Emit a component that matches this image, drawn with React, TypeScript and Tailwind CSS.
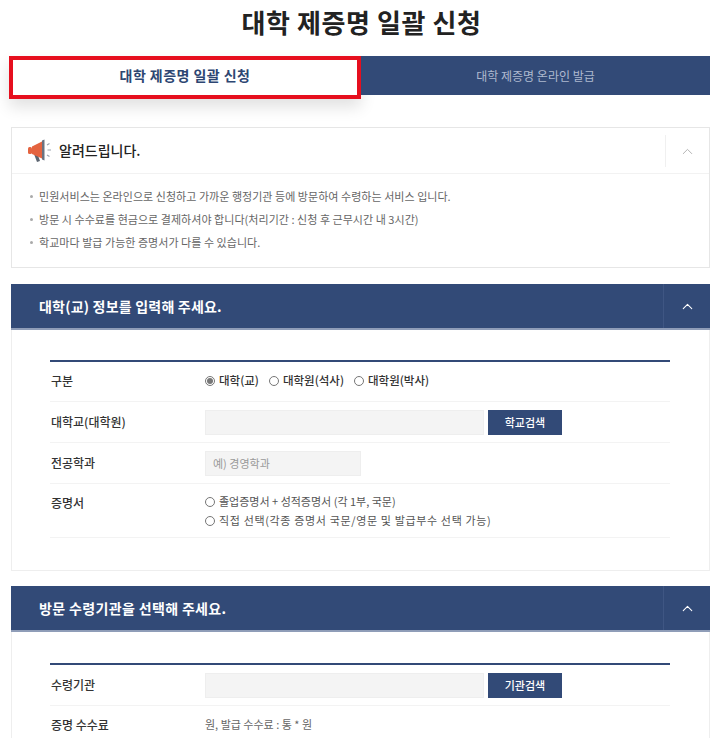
import React from 'react';
import { ChevronUp } from 'lucide-react';

const font = { fontFamily: '"Noto Sans CJK KR", "Noto Sans", sans-serif' };

function Megaphone() {
  return (
    <svg width="26" height="24" viewBox="0 0 26 24" className="shrink-0">
      <path d="M7 15 L10 23 L13 22 L10.5 15 Z" fill="#5b6470" />
      <rect x="1" y="8" width="4" height="7" rx="1.5" fill="#e4633f" />
      <path d="M5 7.5 L15 2.5 L15 19.5 L5 15 Z" fill="#e4633f" />
      <path d="M15 1.5 L17.5 0.5 L17.5 21.5 L15 20.5 Z" fill="#6b7280" />
      <path d="M20 6 L22.5 4.5 M20.5 11 L24 11 M20 16 L22.5 17.5" stroke="#9ca3af" strokeWidth="1.2" />
    </svg>
  );
}

function Radio({ checked = false }: { checked?: boolean }) {
  return (
    <span className="w-[10px] h-[10px] rounded-full border border-[#767676] bg-white flex items-center justify-center shrink-0">
      {checked && <span className="w-[6px] h-[6px] rounded-full bg-[#777]" />}
    </span>
  );
}

function SectionHead({ title, titleClass }: { title: string; titleClass: string }) {
  return (
    <div className="h-[46px] bg-[#324a77] border-b-2 border-[#8f9db8] flex items-center justify-between">
      <h2 className={`pl-[28px] text-[14px] font-bold text-white ${titleClass}`}>{title}</h2>
      <div className="w-[47px] h-[44px] border-l border-[#3f5683] flex items-center justify-center">
        <ChevronUp className="w-[17px] h-[17px] text-white" strokeWidth={1.5} />
      </div>
    </div>
  );
}

function Row({ label, className, labelClass = '', children }: { label: string; className: string; labelClass?: string; children: React.ReactNode }) {
  return (
    <div className={`flex border-b border-[#f3f3f3] ${className}`}>
      <div className={`w-[155px] pl-[1px] text-[12px] font-medium text-[#333] ${labelClass}`}>{label}</div>
      <div className="flex-1">{children}</div>
    </div>
  );
}

export default function App() {
  return (
    <div className="w-[720px] h-[738px] overflow-hidden bg-white" style={font}>
      <h1 className="h-[56px] pb-[13px] pl-[3px] flex items-center justify-center text-[26px] font-bold text-[#222] tracking-[0.6px]">
        대학 제증명 일괄 신청
      </h1>

      <div className="flex items-start pl-[9px] pr-[10px] h-[71px]">
        <button className="w-[352px] h-[43px] pb-[4px] border-4 border-[#e60f1e] bg-white text-[14px] font-bold text-[#2d4672] tracking-[0.45px] shadow-[0_8px_16px_rgba(0,0,0,0.12)]">
          대학 제증명 일괄 신청
        </button>
        <button className="flex-1 h-[39px] bg-[#324a77] text-[12px] text-[#aeb9cf]">대학 제증명 온라인 발급</button>
      </div>

      <div className="ml-[11px] mr-[10px] h-[141px] border border-[#e6e6e6]">
        <div className="h-[46px] border-b border-[#f2f2f2] flex items-center justify-between">
          <div className="flex items-center pl-[15px] gap-[6px]">
            <Megaphone />
            <span className="text-[14px] font-medium text-[#222]">알려드립니다.</span>
          </div>
          <div className="w-[44px] h-[32px] mt-[1px] border-l border-[#f0f0f0] flex items-center justify-center">
            <ChevronUp className="w-[17px] h-[17px] text-[#aaa]" strokeWidth={1.25} />
          </div>
        </div>
        <ul className="pt-[11px] pl-[18px] text-[11px] leading-[23px] text-[#666] tracking-[0.04px]">
          {[
            '민원서비스는 온라인으로 신청하고 가까운 행정기관 등에 방문하여 수령하는 서비스 입니다.',
            '방문 시 수수료를 현금으로 결제하셔야 합니다(처리기간 : 신청 후 근무시간 내 3시간)',
            '학교마다 발급 가능한 증명서가 다를 수 있습니다.',
          ].map((t) => (
            <li key={t} className="flex items-center gap-[6px]">
              <span className="w-[3px] h-[3px] rounded-full bg-[#aaa]" />
              {t}
            </li>
          ))}
        </ul>
      </div>

      <section className="mt-[16px] ml-[11px] mr-[10px]">
        <SectionHead title="대학(교) 정보를 입력해 주세요." titleClass="tracking-[0.2px]" />
        <div className="h-[241px] border border-t-0 border-[#eeeeee] pl-[38px] pr-[39px] pt-[30px]">
          <div className="border-t-2 border-[#324a77]">
            <Row label="구분" className="h-[40px] pt-[10px]">
              <div className="flex items-center text-[11.5px] font-medium text-[#333]">
                <span className="flex items-center gap-[4px] mr-[10px]"><Radio checked />대학(교)</span>
                <span className="flex items-center gap-[4px] mr-[10px]"><Radio />대학원(석사)</span>
                <span className="flex items-center gap-[4px]"><Radio />대학원(박사)</span>
              </div>
            </Row>
            <Row label="대학교(대학원)" className="h-[41px] items-center">
              <div className="flex gap-[4px]">
                <div className="w-[279px] h-[25px] bg-[#f4f4f4] border border-[#eeeeee]" />
                <button className="w-[74px] h-[25px] bg-[#324a77] text-[11px] font-medium text-white">학교검색</button>
              </div>
            </Row>
            <Row label="전공학과" className="h-[41px] items-center">
              <div className="w-[156px] h-[25px] bg-[#f4f4f4] border border-[#eeeeee] pl-[7px] flex items-center text-[11px] text-[#999]">
                예) 경영학과
              </div>
            </Row>
            <Row label="증명서" className="h-[54px] pt-[8px]" labelClass="mt-[2px]">
              <div className="text-[11px] leading-[19px] text-[#555]">
                <div className="flex items-center gap-[4px]"><Radio />졸업증명서 + 성적증명서 (각 1부, 국문)</div>
                <div className="flex items-center gap-[4px] tracking-[0.65px]"><Radio />직접 선택(각종 증명서 국문/영문 및 발급부수 선택 가능)</div>
              </div>
            </Row>
          </div>
        </div>
      </section>

      <section className="mt-[15px] ml-[11px] mr-[10px]">
        <SectionHead title="방문 수령기관을 선택해 주세요." titleClass="tracking-[0.35px]" />
        <div className="border-x border-[#eeeeee] pl-[38px] pr-[39px] pt-[31px]">
          <div className="border-t-2 border-[#324a77]">
            <Row label="수령기관" className="h-[41px] items-center">
              <div className="flex gap-[4px]">
                <div className="w-[279px] h-[25px] bg-[#f4f4f4] border border-[#eeeeee]" />
                <button className="w-[74px] h-[25px] bg-[#324a77] text-[11px] font-medium text-white">기관검색</button>
              </div>
            </Row>
            <div className="flex h-[40px] pt-[10px]">
              <div className="w-[155px] pl-[1px] text-[12px] font-medium text-[#333]">증명 수수료</div>
              <div className="text-[11px] text-[#666]">원, 발급 수수료 : 통 * 원</div>
            </div>
          </div>
        </div>
      </section>
    </div>
  );
}
